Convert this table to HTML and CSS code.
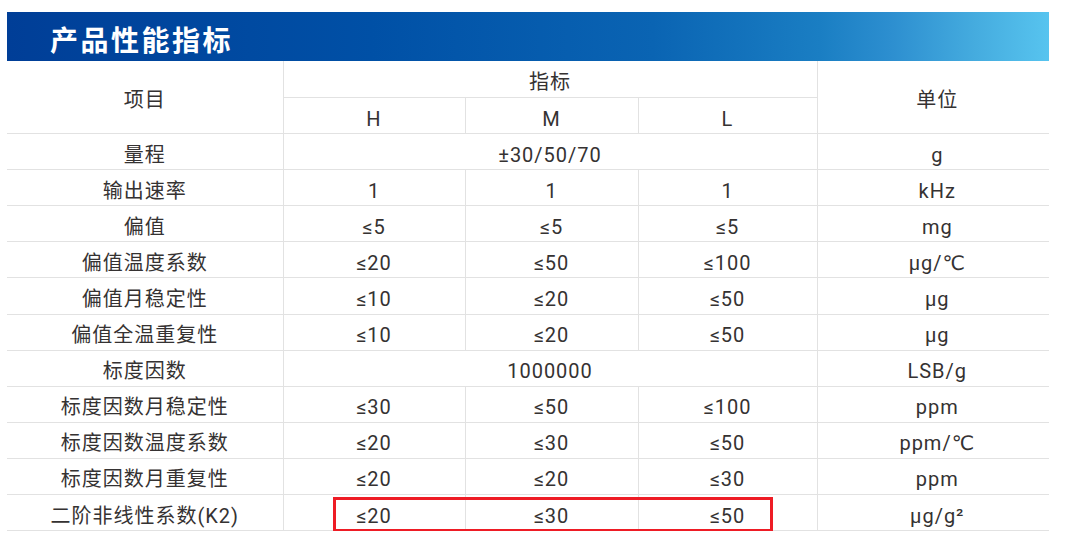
FILE: index.html
```html
<!DOCTYPE html>
<html lang="zh-CN">
<head>
<meta charset="utf-8">
<title>产品性能指标</title>
<link rel="stylesheet" href="styles.css">
</head>
<body>
<div class="page">
  <div class="title-bar"><h1 class="title">产品性能指标</h1></div>
  <div class="table-wrap">
    <table class="spec">
      <colgroup>
        <col class="c-item"><col class="c-h"><col class="c-m"><col class="c-l"><col class="c-unit">
      </colgroup>
      <tr class="head-top">
        <td rowspan="2" class="no-left">项目</td>
        <td colspan="3">指标</td>
        <td rowspan="2" class="no-right unit">单位</td>
      </tr>
      <tr><td>H</td><td>M</td><td>L</td></tr>
      <tr><td class="no-left">量程</td><td colspan="3">±30/50/70</td><td class="no-right unit">g</td></tr>
      <tr><td class="no-left">输出速率</td><td>1</td><td>1</td><td>1</td><td class="no-right unit">kHz</td></tr>
      <tr><td class="no-left">偏值</td><td>≤5</td><td>≤5</td><td>≤5</td><td class="no-right unit">mg</td></tr>
      <tr><td class="no-left">偏值温度系数</td><td>≤20</td><td>≤50</td><td>≤100</td><td class="no-right unit">μg/℃</td></tr>
      <tr><td class="no-left">偏值月稳定性</td><td>≤10</td><td>≤20</td><td>≤50</td><td class="no-right unit">μg</td></tr>
      <tr><td class="no-left">偏值全温重复性</td><td>≤10</td><td>≤20</td><td>≤50</td><td class="no-right unit">μg</td></tr>
      <tr><td class="no-left">标度因数</td><td colspan="3">1000000</td><td class="no-right unit">LSB/g</td></tr>
      <tr><td class="no-left">标度因数月稳定性</td><td>≤30</td><td>≤50</td><td>≤100</td><td class="no-right unit">ppm</td></tr>
      <tr><td class="no-left">标度因数温度系数</td><td>≤20</td><td>≤30</td><td>≤50</td><td class="no-right unit">ppm/℃</td></tr>
      <tr><td class="no-left">标度因数月重复性</td><td>≤20</td><td>≤20</td><td>≤30</td><td class="no-right unit">ppm</td></tr>
      <tr><td class="no-left">二阶非线性系数(K2)</td><td>≤20</td><td>≤30</td><td>≤50</td><td class="no-right unit">μg/g²</td></tr>
    </table>
    <div class="highlight"></div>
  </div>
</div>
</body>
</html>
```

FILE: styles.css
```css
html, body {
  margin: 0;
  padding: 0;
  background: #ffffff;
}

.page {
  padding: 12px 31px 0 7px;
  font-family: "Roboto", "DejaVu Sans", "Noto Sans CJK SC", sans-serif;
}

.title-bar {
  height: 49px;
  background: linear-gradient(to right, #003e97 0%, #0050a6 35%, #0a64b3 62%, #1a7ec3 78%, #2d8fd0 85%, #45acdf 93%, #57c4ef 100%);
  display: flex;
  align-items: center;
}

.title {
  margin: 0;
  padding: 4px 0 0 43px;
  color: #ffffff;
  font-family: "Noto Sans CJK SC", sans-serif;
  font-size: 28px;
  font-weight: 700;
  letter-spacing: 2.5px;
  line-height: 1;
}

.table-wrap {
  position: relative;
}

.spec {
  width: 1042px;
  table-layout: fixed;
  border-collapse: collapse;
  color: #353232;
  font-size: 20px;
  letter-spacing: 1px;
}

.c-item { width: 276px; }
.c-h { width: 182px; }
.c-m { width: 173px; }
.c-l { width: 179px; }
.c-unit { width: 232px; }

.spec td {
  border: 1px solid #e2e2e2;
  height: 29.1px;
  padding: 6px 0 0;
  text-align: center;
  vertical-align: middle;
  line-height: 1;
}

.spec tr.head-top td {
  border-top: none;
  height: 30px;
}

.spec td.no-left { border-left: none; }
.spec td.no-right { border-right: none; }
.spec td.unit { padding-left: 8px; }

.highlight {
  position: absolute;
  left: 326px;
  top: 436px;
  width: 434px;
  height: 29px;
  border: 3px solid #ee1c25;
  pointer-events: none;
}
```
